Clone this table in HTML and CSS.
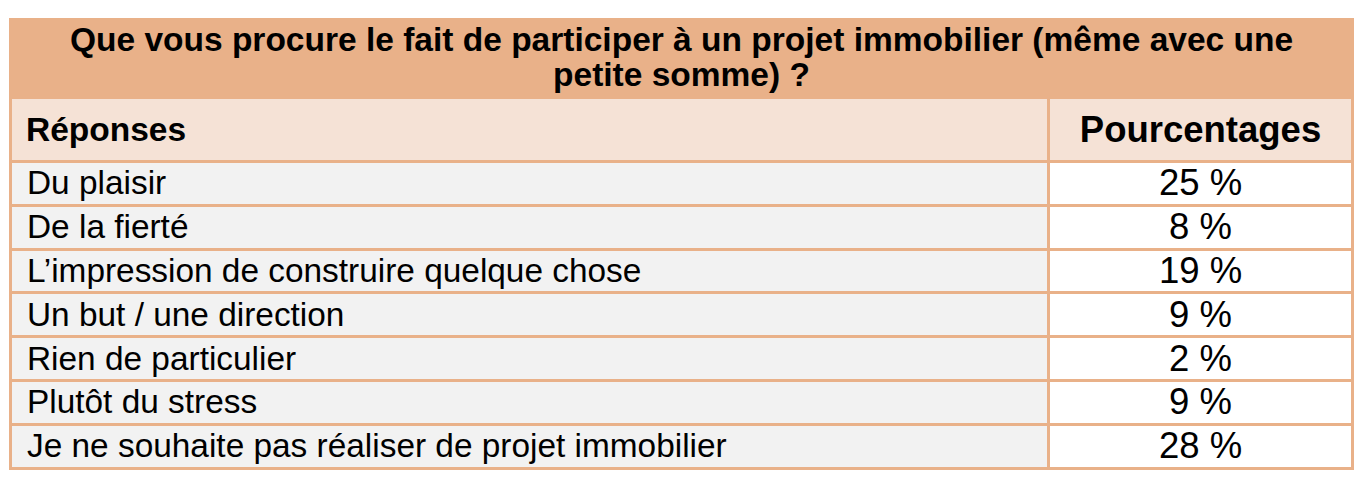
FILE: index.html
```html
<!DOCTYPE html>
<html lang="fr">
<head>
<meta charset="utf-8">
<title>Sondage projet immobilier</title>
<link rel="stylesheet" href="styles.css">
</head>
<body>
<table class="survey">
  <colgroup>
    <col class="c-label">
    <col class="c-value">
  </colgroup>
  <tr>
    <th class="title" colspan="2">Que vous procure le fait de participer à un projet immobilier (même avec une<br>petite somme) ?</th>
  </tr>
  <tr class="head">
    <th class="col-label">Réponses</th>
    <th class="col-value">Pourcentages</th>
  </tr>
  <tr class="row"><td class="label">Du plaisir</td><td class="value">25 %</td></tr>
  <tr class="row"><td class="label">De la fierté</td><td class="value">8 %</td></tr>
  <tr class="row"><td class="label">L’impression de construire quelque chose</td><td class="value">19 %</td></tr>
  <tr class="row"><td class="label">Un but / une direction</td><td class="value">9 %</td></tr>
  <tr class="row"><td class="label">Rien de particulier</td><td class="value">2 %</td></tr>
  <tr class="row"><td class="label">Plutôt du stress</td><td class="value">9 %</td></tr>
  <tr class="row"><td class="label">Je ne souhaite pas réaliser de projet immobilier</td><td class="value">28 %</td></tr>
</table>
</body>
</html>
```

FILE: styles.css
```css
html, body {
  margin: 0;
  padding: 0;
  background: #ffffff;
}

body {
  padding: 18px 0 0 9px;
  font-family: "Liberation Sans", Arial, sans-serif;
  color: #000000;
}

.survey {
  width: 1345px;
  border-collapse: separate;
  border-spacing: 3px;
  background: #e9b189;
  table-layout: fixed;
}

.c-label {
  width: 1035px;
}

.c-value {
  width: 301px;
}

.survey .title {
  height: 74px;
  padding: 1px 0 0 0;
  vertical-align: top;
  text-align: center;
  font-size: 33.5px;
  line-height: 35px;
  font-weight: bold;
  background: #e9b189;
  white-space: nowrap;
}

.survey .head th {
  height: 61px;
  padding: 0;
  background: #f5e2d6;
  font-weight: bold;
  vertical-align: middle;
  white-space: nowrap;
}

.survey .head .col-label {
  padding-left: 14px;
  text-align: left;
  font-size: 33.5px;
}

.survey .head .col-value {
  text-align: center;
  font-size: 36.5px;
}

.survey .row td {
  height: 40.8px;
  padding: 0;
  vertical-align: middle;
  line-height: 38px;
  white-space: nowrap;
}

.survey .row .label {
  padding-left: 15px;
  background: #f2f2f2;
  font-size: 33.4px;
}

.survey .row .value {
  background: #ffffff;
  text-align: center;
  font-size: 36.5px;
}
```
